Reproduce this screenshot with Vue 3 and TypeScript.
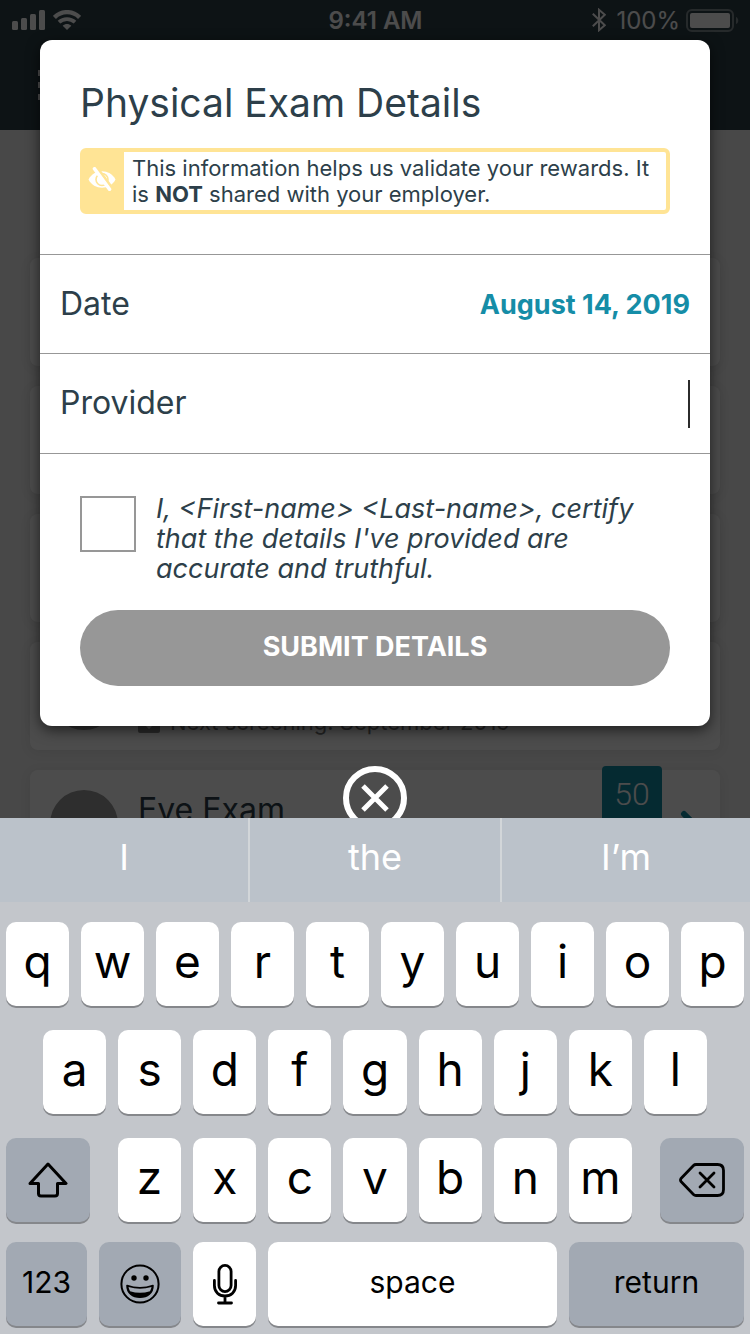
<script setup lang="ts">
import { ref } from 'vue'

interface Activity {
  id: number
  title?: string
  note?: string
  points?: number
}

const activities: Activity[] = [
  { id: 1 },
  { id: 2 },
  { id: 3 },
  { id: 4, note: 'Next screening: September 2019' },
  { id: 5, title: 'Eye Exam', points: 50 },
]

const provider = ref('')
const certified = ref(false)

const suggestions = ['I', 'the', 'I’m']
const topRow = [...'qwertyuiop']
const homeRow = [...'asdfghjkl']
const bottomRow = [...'zxcvbnm']

function type(letter: string) {
  provider.value += letter
}

function erase() {
  provider.value = provider.value.slice(0, -1)
}
</script>

<template>
  <div class="screen">
    <div class="page">
      <header class="header">
        <div class="status">
          <div class="status-left">
            <svg width="34" height="20" viewBox="0 0 34 20" fill="#fff" aria-hidden="true">
              <rect x="0" y="11" width="6" height="9" rx="1.5" />
              <rect x="9" y="8" width="6" height="12" rx="1.5" />
              <rect x="18" y="4" width="6" height="16" rx="1.5" />
              <rect x="27" y="0" width="6" height="20" rx="1.5" />
            </svg>
            <svg width="28" height="20" viewBox="0 0 28 20" aria-hidden="true">
              <path d="M1.400 7.400C8.400 .4 19.600 .4 26.600 7.400" fill="none" stroke="#fff" stroke-width="4.400" />
              <path d="M6 12.200C10.500 8 17.500 8 22 12.200" fill="none" stroke="#fff" stroke-width="3.800" />
              <path d="M9.700 15.800C12.200 13.400 15.800 13.400 18.300 15.800L14 20Z" fill="#fff" />
            </svg>
          </div>
          <span class="clock">9:41 AM</span>
          <div class="status-right">
            <svg width="14" height="24" viewBox="0 0 14 24" fill="none" stroke="#fff" stroke-width="2" aria-hidden="true">
              <path d="M.8 5.800 12.800 17.200 7 22.200V1.800L12.800 6.800 .8 18.200" />
            </svg>
            <span>100%</span>
            <svg width="53" height="23" viewBox="0 0 53 23" aria-hidden="true">
              <rect x="1" y="1" width="46" height="21" rx="5" fill="none" stroke="#fff" stroke-opacity=".4" stroke-width="2" />
              <rect x="4" y="4" width="40" height="15" rx="2" fill="#fff" />
              <path d="M50 8C53 9 53 14 50 15Z" fill="#fff" fill-opacity=".4" />
            </svg>
          </div>
        </div>
        <svg class="menu" width="42" height="30" viewBox="0 0 42 30" fill="#fff" aria-hidden="true">
          <path d="M0 0H6V6H0ZM0 12H6V18H0ZM0 24H6V30H0ZM11 0H42V6H11ZM11 12H42V18H11ZM11 24H42V30H11Z" />
        </svg>
      </header>
      <main class="activities">
        <article v-for="item in activities" :key="item.id" class="card">
          <span class="avatar"></span>
          <div class="card-text">
            <h2 v-if="item.title">{{ item.title }}</h2>
            <p v-if="item.note">
              <svg width="22" height="22" viewBox="0 0 22 22" aria-hidden="true">
                <rect width="22" height="22" rx="2" fill="#8a8a8a" />
                <path d="M7 12 11 16 15 12" fill="none" stroke="#fff" stroke-width="3" />
              </svg>
              {{ item.note }}
            </p>
          </div>
          <template v-if="item.points">
            <span class="points">{{ item.points }}</span>
            <svg class="chevron" width="20" height="32" viewBox="0 0 20 32" fill="none" stroke="#118ca6" stroke-width="6" stroke-linecap="round" aria-hidden="true">
              <path d="M4 4 16 16 4 28" />
            </svg>
          </template>
        </article>
      </main>
    </div>

    <div class="overlay">
      <div class="stage">
        <form class="dialog" role="dialog" aria-labelledby="dialog-title" @submit.prevent>
          <div class="intro">
            <h1 id="dialog-title">Physical Exam Details</h1>
            <div class="notice">
              <div class="notice-icon">
                <svg width="28" height="24" viewBox="0 0 28 24" aria-hidden="true">
                  <path d="M.5 12.500C6 1.500 22 1.500 27.500 12.500 22 23.500 6 23.500 .5 12.500Z" fill="#fff" />
                  <circle cx="14" cy="12.500" r="6" fill="none" stroke="#ffe495" stroke-width="1.600" />
                  <path d="M14 9A3.500 3.500 0 0 1 17.500 12.500" fill="none" stroke="#ffe495" stroke-width="1.600" />
                  <path d="M8.500 0 25 22.500" stroke="#ffe495" stroke-width="3" />
                  <path d="M6.500 1.800 21.500 22.200" stroke="#fff" stroke-width="3.600" stroke-linecap="round" />
                </svg>
              </div>
              <p>This information helps us validate your rewards. It is <strong>NOT</strong> shared with your employer.</p>
            </div>
          </div>
          <div class="row">
            <span class="label">Date</span>
            <button type="button" class="date">August 14, 2019</button>
          </div>
          <div class="row tall">
            <label class="label" for="provider">Provider</label>
            <input id="provider" v-model="provider" class="provider" type="text" autocomplete="off" />
            <span class="caret"></span>
          </div>
          <div class="confirm">
            <div class="certify">
              <input id="certify" v-model="certified" type="checkbox" />
              <label for="certify">I, &lt;First-name&gt; &lt;Last-name&gt;, certify that the details I've provided are accurate and truthful.</label>
            </div>
            <button type="submit" class="submit">SUBMIT DETAILS</button>
          </div>
        </form>
        <button type="button" class="close" aria-label="Close">
          <svg width="64" height="64" viewBox="0 0 64 64" fill="none" stroke="#fff" aria-hidden="true">
            <circle cx="32" cy="32" r="29" stroke-width="6" />
            <path d="M20 20 44 44M44 20 20 44" stroke-width="5" />
          </svg>
        </button>
      </div>

      <div class="keyboard">
        <div class="suggestions">
          <button v-for="word in suggestions" :key="word" type="button" @click="type(word)">{{ word }}</button>
        </div>
        <div class="keys">
          <div class="key-row">
            <button v-for="k in topRow" :key="k" type="button" class="key" @click="type(k)">{{ k }}</button>
          </div>
          <div class="key-row home">
            <button v-for="k in homeRow" :key="k" type="button" class="key" @click="type(k)">{{ k }}</button>
          </div>
          <div class="key-row wide-gap">
            <button type="button" class="key grey edge" aria-label="Shift">
              <svg width="40" height="36" viewBox="0 0 40 36" fill="none" stroke="#000" stroke-width="3" stroke-linejoin="round" aria-hidden="true">
                <path d="M20 2 38 21.500H29.500V31.500Q29.500 34 27 34H13Q10.500 34 10.500 31.500V21.500H2Z" />
              </svg>
            </button>
            <div class="key-row letters">
              <button v-for="k in bottomRow" :key="k" type="button" class="key" @click="type(k)">{{ k }}</button>
            </div>
            <button type="button" class="key grey edge" aria-label="Delete" @click="erase">
              <svg width="46" height="34" viewBox="0 0 46 34" fill="none" stroke="#000" stroke-width="2.800" stroke-linejoin="round" stroke-linecap="round" aria-hidden="true">
                <path d="M17 1.500H38.500Q44.500 1.500 44.500 7.500V26.500Q44.500 32.500 38.500 32.500H17Q15.500 32.500 14.500 31.500L2 18.500Q1 17 2 15.500L14.500 2.500Q15.500 1.500 17 1.500Z" />
                <path d="M21 10 35 24M35 10 21 24" />
              </svg>
            </button>
          </div>
          <div class="key-row functions">
            <button type="button" class="key grey word">123</button>
            <button type="button" class="key grey" aria-label="Emoji">
              <svg width="40" height="40" viewBox="0 0 40 40" aria-hidden="true">
                <circle cx="20" cy="20" r="18.600" fill="none" stroke="#000" stroke-width="2" />
                <circle cx="14" cy="14" r="2.700" />
                <circle cx="26" cy="14" r="2.700" />
                <path d="M7 21.500Q20 26 33 21.500C33 29 27.500 33.200 20 33.200S7 29 7 21.500Z" stroke="#000" stroke-width="1.600" stroke-linejoin="round" />
                <path d="M8.500 23Q20 26.500 31.500 23Q31 25.500 30 27.200Q20 30.500 10 27.200Q9 25.500 8.500 23Z" fill="#a2a9b3" />
              </svg>
            </button>
            <button type="button" class="key" aria-label="Dictate">
              <svg width="26" height="42" viewBox="0 0 26 42" fill="none" stroke="#000" stroke-width="2.800" stroke-linecap="round" aria-hidden="true">
                <rect x="6.900" y="2.400" width="12.200" height="26.200" rx="6.100" />
                <path d="M2.400 17.500V22.500C2.400 29 7 33 13 33S23.600 29 23.600 22.500V17.500M13 33V40M6.500 40H19.500" />
              </svg>
            </button>
            <button type="button" class="key word" @click="type(' ')">space</button>
            <button type="button" class="key grey word">return</button>
          </div>
        </div>
      </div>
    </div>
  </div>
</template>

<style>
body {
  margin: 0;
}
</style>

<style scoped>
* {
  box-sizing: border-box;
}

button,
input {
  font: inherit;
  border: 0;
  padding: 0;
  background: none;
}

svg {
  display: block;
  flex: none;
}

.screen {
  position: relative;
  height: 100vh;
  overflow: hidden;
  font-family: Inter, "Liberation Sans", sans-serif;
  color: #2d3f4a;
}

.page {
  height: 100%;
  overflow: hidden;
  background: #f0f0f0;
}

.header {
  height: 130px;
  background: #2e4049;
  color: #fff;
}

.status {
  display: grid;
  grid-template-columns: 1fr auto 1fr;
  align-items: center;
  height: 40px;
  padding: 0 11px 0 12px;
  font-size: 24px;
}

.status-left,
.status-right {
  display: flex;
  align-items: center;
  gap: 7px;
}

.status-right {
  justify-content: flex-end;
  gap: 6px;
}

.status-right span {
  padding-left: 4px;
}

.clock {
  font-weight: 600;
}

.menu {
  margin: 30px 0 0 38px;
}

.activities {
  display: flex;
  flex-direction: column;
  gap: 20px;
  padding: 128px 30px 0;
}

.card {
  display: flex;
  flex: none;
  height: 108px;
  padding: 20px 20px 16px;
  border-radius: 8px;
  background: #fff;
  box-shadow: 0 2px 12px rgba(0, 0, 0, 0.08);
}

.avatar {
  flex: none;
  width: 68px;
  height: 68px;
  border-radius: 50%;
  background: #999;
}

.card-text {
  display: flex;
  flex: 1;
  flex-direction: column;
  justify-content: space-between;
  padding-left: 20px;
}

.card h2 {
  margin: 0;
  font-size: 32px;
  font-weight: 400;
  line-height: 40px;
}

.card p {
  display: flex;
  align-items: center;
  gap: 10px;
  margin: auto 0 0;
  font-size: 22px;
  line-height: 24px;
  color: #777;
}

.points {
  width: 60px;
  height: 68px;
  margin: -24px 18px 0 0;
  border-radius: 4px;
  background: #118ca6;
  color: #fff;
  font-family: Roboto, "Liberation Sans", sans-serif;
  font-size: 32px;
  font-weight: 300;
  line-height: 56px;
  text-align: center;
}

.chevron {
  margin-top: 20px;
}

.overlay {
  position: absolute;
  inset: 0;
  display: flex;
  flex-direction: column;
  background: rgba(0, 0, 0, 0.7);
}

.stage {
  display: flex;
  flex: 1;
  flex-direction: column;
  align-items: center;
  gap: 40px;
  min-height: 0;
  padding: 40px 40px 0;
  overflow: hidden;
}

.dialog {
  flex: none;
  width: 100%;
  border-radius: 12px;
  background: #fff;
  box-shadow: 0 4px 14px rgba(0, 0, 0, 0.6);
}

.intro {
  padding: 40px;
}

h1 {
  margin: 0 0 22px;
  font-size: 39px;
  font-weight: 400;
  line-height: 46px;
}

.notice {
  display: flex;
  border: 4px solid #ffe495;
  border-radius: 6px;
}

.notice-icon {
  display: flex;
  justify-content: center;
  width: 40px;
  padding: 15px 4px 0 0;
  background: #ffe495;
}

.notice p {
  flex: 1;
  margin: 0;
  padding: 3px 0 3px 8px;
  font-size: 22px;
  line-height: 26px;
}

.row {
  display: flex;
  align-items: center;
  height: 99px;
  padding: 0 20px;
  border-top: 1px solid #979797;
}

.tall {
  height: 100px;
}

.label {
  padding-bottom: 2px;
  font-size: 32px;
}

.date {
  margin-left: auto;
  font-size: 27px;
  font-weight: 700;
  color: #158da7;
}

.provider {
  flex: 1;
  min-width: 0;
  outline: 0;
  font-size: 27px;
  text-align: right;
  caret-color: transparent;
}

.caret {
  width: 2px;
  height: 48px;
  background: #2b2b2b;
}

.confirm {
  padding: 40px;
  border-top: 1px solid #979797;
}

.certify {
  display: flex;
  gap: 20px;
  margin-bottom: 26px;
}

.certify input {
  flex: none;
  width: 56px;
  height: 56px;
  margin: 2px 0 0;
  border: 2px solid #979797;
  appearance: none;
}

.certify input:checked {
  background: #158da7;
}

.certify label {
  font-size: 27px;
  font-style: italic;
  line-height: 30px;
}

.submit {
  display: block;
  width: 100%;
  height: 76px;
  padding-bottom: 4px;
  border-radius: 38px;
  background: #979797;
  color: #fff;
  font-size: 27px;
  font-weight: 700;
}

.close {
  flex: none;
}

.keyboard {
  background: #c3c6cb;
  color: #000;
}

.suggestions {
  display: grid;
  grid-template-columns: repeat(3, 1fr);
  height: 84px;
  background: #bbc2ca;
}

.suggestions button {
  padding-bottom: 6px;
  color: #fff;
  font-size: 36px;
}

.suggestions button:first-child {
  border-right: 2px solid #d2d6d9;
}

.suggestions button:last-child {
  border-left: 2px solid #d2d6d9;
}

.keys {
  display: flex;
  flex-direction: column;
  gap: 24px;
  padding: 20px 6px 8px;
}

.key-row {
  display: flex;
  gap: 12px;
}

.home {
  padding: 0 37px;
}

.wide-gap {
  gap: 28px;
}

.letters {
  flex: 1;
}

.functions {
  display: grid;
  grid-template-columns: 81fr 82fr 63fr 289fr 175fr;
  margin-top: -4px;
}

.key {
  display: flex;
  flex: 1;
  align-items: center;
  justify-content: center;
  min-width: 0;
  height: 84px;
  padding-bottom: 6px;
  border-radius: 10px;
  background: #fff;
  box-shadow: 0 2px 0 #85878b;
  color: #000;
  font-size: 46px;
}

.key svg {
  margin-top: 6px;
}

.grey {
  background: #a2a9b3;
}

.edge {
  flex: 0 0 84px;
}

.word {
  padding-bottom: 4px;
  font-size: 30px;
}
</style>
